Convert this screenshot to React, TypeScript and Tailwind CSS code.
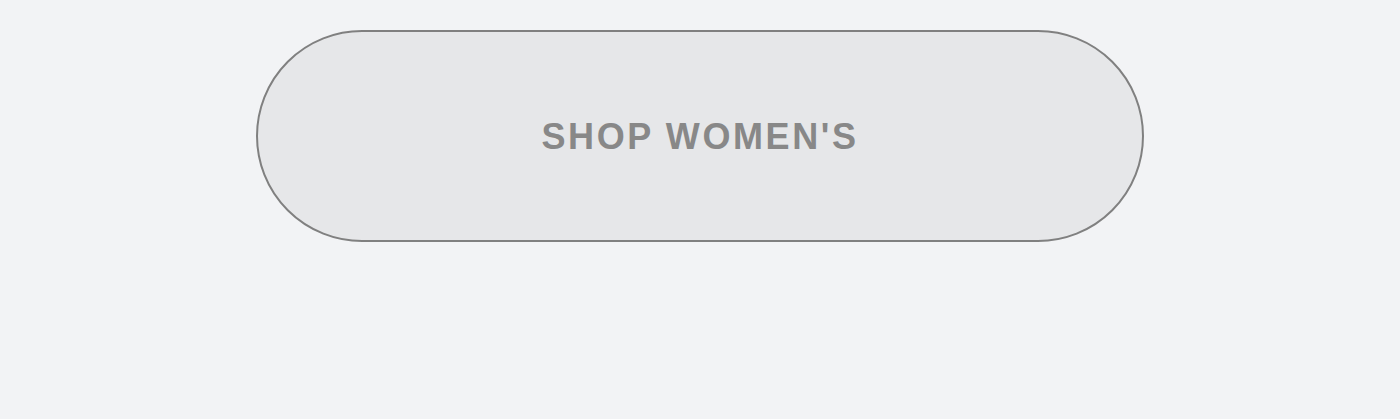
export default function App() {
  return (
    <div className="flex min-h-[419px] w-full justify-center bg-[#f2f3f5] pt-[30px]">
      <button
        type="button"
        className="flex h-[212px] w-[888px] items-center justify-center rounded-full border-[2.5px] border-solid border-[#808080] bg-[#e6e7e9]"
      >
        <span
          className="pt-[2px] text-[36px] font-bold uppercase tracking-[2.6px] text-[#888888]"
          style={{ fontFamily: '"Liberation Sans", Arial, sans-serif' }}
        >
          Shop Women's
        </span>
      </button>
    </div>
  );
}
